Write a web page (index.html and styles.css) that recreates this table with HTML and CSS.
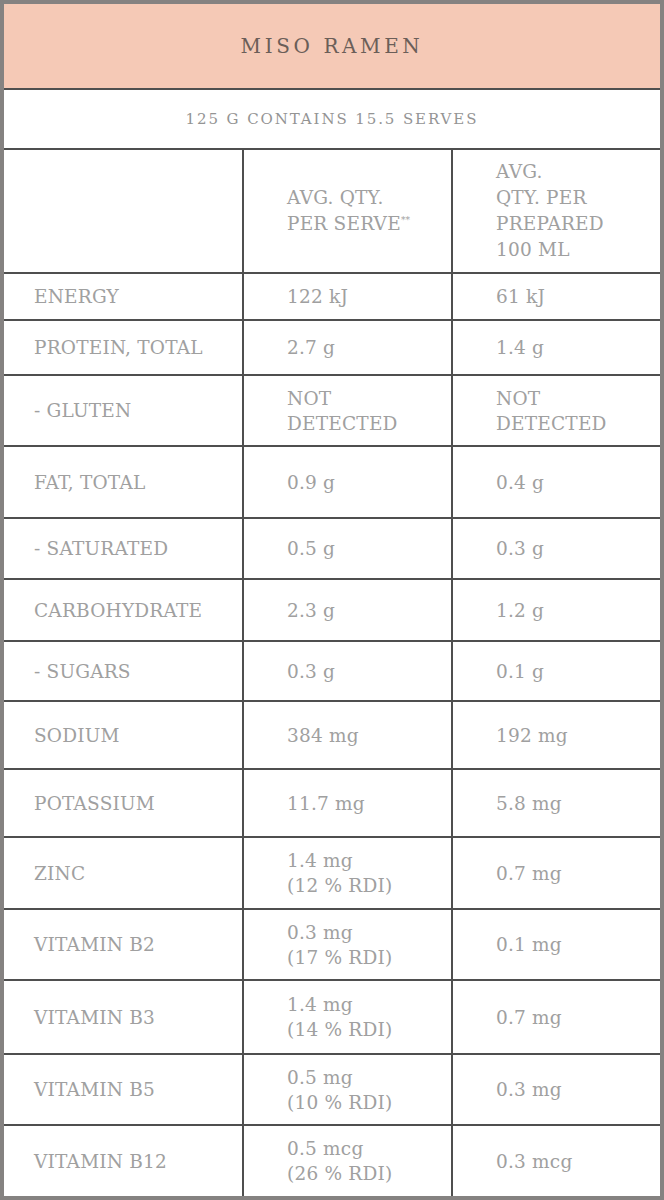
FILE: index.html
```html
<!DOCTYPE html>
<html lang="en">
<head>
<meta charset="utf-8">
<title>Miso Ramen – Nutrition</title>
<link rel="stylesheet" href="styles.css">
</head>
<body>
<table class="nutri">
  <colgroup>
    <col class="c1"><col class="c2"><col class="c3">
  </colgroup>
  <thead>
    <tr class="title-row"><th colspan="3" class="title">MISO RAMEN</th></tr>
    <tr class="sub-row"><th colspan="3" class="sub">125 G CONTAINS 15.5 SERVES</th></tr>
    <tr class="head-row">
      <th></th>
      <th class="hv">AVG. QTY.<br>PER SERVE<sup>**</sup></th>
      <th class="hv">AVG.<br>QTY. PER<br>PREPARED<br>100 ML</th>
    </tr>
  </thead>
  <tbody>
    <tr><td>ENERGY</td><td>122 kJ</td><td>61 kJ</td></tr>
    <tr><td>PROTEIN, TOTAL</td><td>2.7 g</td><td>1.4 g</td></tr>
    <tr><td>- GLUTEN</td><td>NOT<br>DETECTED</td><td>NOT<br>DETECTED</td></tr>
    <tr><td>FAT, TOTAL</td><td>0.9 g</td><td>0.4 g</td></tr>
    <tr><td>- SATURATED</td><td>0.5 g</td><td>0.3 g</td></tr>
    <tr><td>CARBOHYDRATE</td><td>2.3 g</td><td>1.2 g</td></tr>
    <tr><td>- SUGARS</td><td>0.3 g</td><td>0.1 g</td></tr>
    <tr><td>SODIUM</td><td>384 mg</td><td>192 mg</td></tr>
    <tr><td>POTASSIUM</td><td>11.7 mg</td><td>5.8 mg</td></tr>
    <tr><td>ZINC</td><td>1.4 mg<br>(12 % RDI)</td><td>0.7 mg</td></tr>
    <tr><td>VITAMIN B2</td><td>0.3 mg<br>(17 % RDI)</td><td>0.1 mg</td></tr>
    <tr><td>VITAMIN B3</td><td>1.4 mg<br>(14 % RDI)</td><td>0.7 mg</td></tr>
    <tr><td>VITAMIN B5</td><td>0.5 mg<br>(10 % RDI)</td><td>0.3 mg</td></tr>
    <tr><td>VITAMIN B12</td><td>0.5 mcg<br>(26 % RDI)</td><td>0.3 mcg</td></tr>
  </tbody>
</table>
</body>
</html>
```
FILE: styles.css
```css
html, body {
  margin: 0;
  padding: 0;
  background: #ffffff;
}

.nutri {
  width: 664px;
  table-layout: fixed;
  border-collapse: separate;
  border-spacing: 0;
  border: 4px solid #858281;
  font-family: "DejaVu Serif", "Liberation Serif", serif;
  color: #a0a0a0;
  font-size: 18.5px;
  line-height: 25px;
}

.nutri col.c1 { width: 240px; }
.nutri col.c2 { width: 209px; }
.nutri col.c3 { width: 207px; }

.nutri th,
.nutri td {
  box-sizing: border-box;
  padding: 0 4px 0 43px;
  text-align: left;
  vertical-align: middle;
  font-weight: normal;
  border-bottom: 2px solid #4f4f4f;
  border-right: 2px solid #4f4f4f;
  letter-spacing: 0.2px;
  white-space: nowrap;
}

.nutri th:last-child,
.nutri td:last-child {
  border-right: none;
}

.nutri td:first-child,
.nutri .head-row th:first-child {
  padding-left: 30px;
}

.nutri tbody tr:last-child td {
  border-bottom: none;
}

.nutri .title {
  background: #f5c9b6;
  color: #6b5e58;
  text-align: center;
  padding: 0;
  font-size: 20px;
  letter-spacing: 3.6px;
  height: 86px;
}

.nutri .sub {
  text-align: center;
  padding: 0;
  font-size: 15px;
  letter-spacing: 1.9px;
  color: #949494;
  height: 60px;
}

.nutri .head-row th {
  height: 124px;
  line-height: 26px;
}

.nutri .hv sup {
  font-size: 9px;
  line-height: 0;
  vertical-align: 7px;
  letter-spacing: 0;
}

.nutri tbody tr:nth-child(1) td { height: 47px; }
.nutri tbody tr:nth-child(2) td { height: 55px; }
.nutri tbody tr:nth-child(3) td { height: 71px; }
.nutri tbody tr:nth-child(4) td { height: 72px; }
.nutri tbody tr:nth-child(5) td { height: 61px; }
.nutri tbody tr:nth-child(6) td { height: 62px; }
.nutri tbody tr:nth-child(7) td { height: 60px; }
.nutri tbody tr:nth-child(8) td { height: 68px; }
.nutri tbody tr:nth-child(9) td { height: 68px; }
.nutri tbody tr:nth-child(10) td { height: 72px; }
.nutri tbody tr:nth-child(11) td { height: 71px; }
.nutri tbody tr:nth-child(12) td { height: 74px; }
.nutri tbody tr:nth-child(13) td { height: 71px; }
.nutri tbody tr:nth-child(14) td { height: 70px; }
```
